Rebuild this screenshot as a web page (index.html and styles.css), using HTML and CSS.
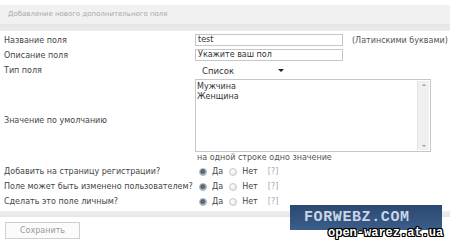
FILE: index.html
```html
<!DOCTYPE html>
<html lang="ru">
<head>
  <meta charset="UTF-8" />
  <title>Добавление нового дополнительного поля</title>
  <link rel="stylesheet" href="styles.css">
</head>
<body>
  <div class="head">Добавление нового дополнительного поля</div>
  <div class="head-band"></div>

  <div class="form">
    <div class="row row-name">
      <div class="label">Название поля</div>
      <div class="field">
        <div class="input">test</div>
        <span class="note">(Латинскими буквами)</span>
      </div>
    </div>

    <div class="row row-desc">
      <div class="label">Описание поля</div>
      <div class="field">
        <div class="input">Укажите ваш пол</div>
      </div>
    </div>

    <div class="row row-type">
      <div class="label">Тип поля</div>
      <div class="field">
        <div class="select"><span>Список</span><span class="arrow"></span></div>
      </div>
    </div>

    <div class="row row-default">
      <div class="label label-low">Значение по умолчанию</div>
      <div class="field">
        <div class="textarea">
          <div class="textarea-text">Мужчина<br>Женщина</div>
          <div class="scrollbar">
            <span class="sb-up"></span>
            <span class="sb-down"></span>
          </div>
        </div>
      </div>
    </div>

    <div class="hint">на одной строке одно значение</div>

    <div class="row row-radio">
      <div class="label">Добавить на страницу регистрации?</div>
      <div class="field">
        <span class="radio on"></span><span class="opt">Да</span>
        <span class="radio"></span><span class="opt">Нет</span>
        <span class="help">[?]</span>
      </div>
    </div>

    <div class="row row-radio">
      <div class="label">Поле может быть изменено пользователем?</div>
      <div class="field">
        <span class="radio on"></span><span class="opt">Да</span>
        <span class="radio"></span><span class="opt">Нет</span>
        <span class="help">[?]</span>
      </div>
    </div>

    <div class="row row-radio">
      <div class="label">Сделать это поле личным?</div>
      <div class="field">
        <span class="radio on"></span><span class="opt">Да</span>
        <span class="radio"></span><span class="opt">Нет</span>
        <span class="help">[?]</span>
      </div>
    </div>
  </div>

  <div class="foot-band"></div>

  <div class="actions">
    <button class="save">Сохранить</button>
  </div>

  <div class="watermark">
    <div class="wm-box">FORWEBZ.COM</div>
    <div class="wm-site">open-warez.at.ua</div>
  </div>
</body>
</html>
```

FILE: styles.css
```css
body {
  margin: 0;
  width: 450px;
  height: 242px;
  overflow: hidden;
  position: relative;
  background: #fff;
  color: #454545;
  font-family: "DejaVu Sans", Verdana, sans-serif;
  font-size: 8px;
}

.head {
  margin-top: 5px;
  height: 19px;
  line-height: 19px;
  padding-left: 8px;
  background: #f1f1f1;
  color: #a8a8a8;
  font-size: 7px;
}

.head-band {
  height: 7px;
  background: linear-gradient(to bottom, #e4e4e4, #ececec);
}

.form {
  padding-top: 3px;
}

.row {
  display: flex;
  align-items: center;
}

.label {
  width: 191px;
  padding-left: 4px;
  flex-shrink: 0;
  white-space: nowrap;
}

.field {
  display: flex;
  align-items: center;
}

.row-name {
  height: 12px;
  margin-bottom: 3px;
}

.row-desc {
  height: 12px;
  margin-bottom: 2px;
}

.row-type {
  height: 15px;
  margin-bottom: 1px;
}

.row-default {
  height: 73px;
  align-items: flex-start;
}

.label-low {
  margin-top: 37px;
  line-height: 10px;
}

.input {
  box-sizing: border-box;
  width: 148px;
  height: 12px;
  line-height: 10px;
  padding: 0 2px;
  border: 1px solid #c6c6c6;
  color: #333;
}

.note {
  margin-left: 9px;
  color: #555;
}

.select {
  box-sizing: border-box;
  width: 95px;
  height: 15px;
  padding: 0 6px 0 7px;
  display: flex;
  align-items: center;
  justify-content: space-between;
  color: #333;
  font-size: 8.5px;
}

.arrow {
  width: 0;
  height: 0;
  border-left: 3px solid transparent;
  border-right: 3px solid transparent;
  border-top: 3px solid #222;
}

.textarea {
  box-sizing: border-box;
  width: 236px;
  height: 73px;
  border: 1px solid #c6c6c6;
  display: flex;
}

.textarea-text {
  flex: 1;
  padding: 2px 1px;
  line-height: 10px;
  color: #333;
}

.scrollbar {
  width: 11px;
  margin: 1px 1px 1px 0;
  background: #f0f0f0;
  border-left: 1px solid #e2e2e2;
  display: flex;
  flex-direction: column;
  justify-content: space-between;
  align-items: center;
  padding: 3px 0;
}

.sb-up, .sb-down {
  width: 0;
  height: 0;
  border-left: 2px solid transparent;
  border-right: 2px solid transparent;
}

.sb-up {
  border-bottom: 2px solid #999;
}

.sb-down {
  border-top: 2px solid #999;
}

.hint {
  height: 12px;
  line-height: 12px;
  padding-left: 197px;
  color: #555;
}

.row-radio {
  height: 15px;
}

.row-radio .field {
  padding-left: 4px;
}

.radio {
  box-sizing: border-box;
  width: 8px;
  height: 8px;
  border-radius: 50%;
  background: radial-gradient(circle at 40% 35%, #ffffff, #dcdcdc);
  border: 1px solid #c8c8c8;
}

.radio.on {
  background: radial-gradient(circle at 45% 40%, #6c7c88 0, #4a5a66 35%, #9aa8b0 60%, #e4e8ea 100%);
  border-color: #a8b0b6;
}

.opt {
  margin: 0 6px 0 5px;
  color: #444;
}

.help {
  margin-left: 4px;
  color: #9aaab8;
}

.foot-band {
  margin-top: 2px;
  height: 6px;
  background: linear-gradient(to bottom, #eeeeee, #e6e6e6);
}

.actions {
  padding: 5px 0 0 5px;
}

.save {
  box-sizing: border-box;
  width: 75px;
  height: 17px;
  padding: 0;
  border: 1px solid #cfcfcf;
  background: #fbfbfb;
  color: #9a9a9a;
  font-family: "DejaVu Sans", Verdana, sans-serif;
  font-size: 8px;
}

.watermark {
  position: absolute;
  left: 290px;
  top: 205px;
  width: 160px;
  height: 37px;
}

.wm-box {
  width: 152px;
  height: 25px;
  line-height: 25px;
  padding-left: 14px;
  box-sizing: border-box;
  background: linear-gradient(to bottom, #2c4870, #3b5e8a);
  color: #c9d5e6;
  font-family: "Liberation Mono", monospace;
  font-weight: bold;
  font-size: 15px;
  letter-spacing: 0.6px;
}

.wm-site {
  position: absolute;
  left: 38px;
  top: 21px;
  color: #fff;
  font-family: "Liberation Mono", monospace;
  font-weight: bold;
  font-size: 12px;
  line-height: 14px;
  text-shadow: 1px 0 0 #000, -1px 0 0 #000, 0 1px 0 #000, 0 -1px 0 #000,
    1px 1px 0 #000, -1px -1px 0 #000, 1px -1px 0 #000, -1px 1px 0 #000;
}
```
